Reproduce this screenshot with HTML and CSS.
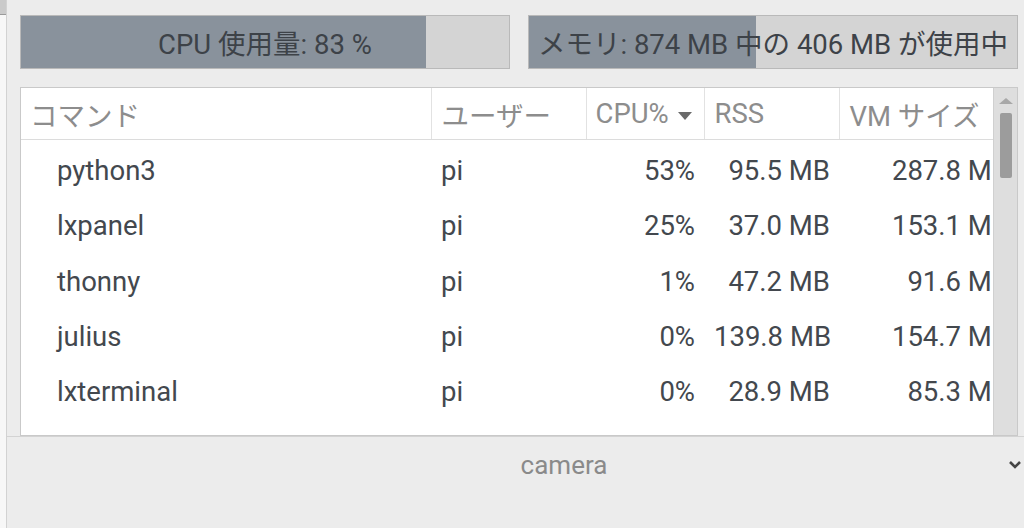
FILE: index.html
```html
<!DOCTYPE html>
<html lang="ja">
<head>
    <meta charset="UTF-8">
    <title>タスクマネージャー</title>
    <link rel="stylesheet" href="styles.css">
</head>
<body>
    <!-- 左端の別ウィンドウ -->
    <div class="borde">
        <div class="borde-top"></div>
    </div>

    <div class="ventana">
        <div class="contenido">
            <!-- 使用量バー -->
            <div class="barras">
                <div class="barra">
                    <div class="relleno" style="width: 83%"></div>
                    <span class="texto">CPU 使用量: 83 %</span>
                </div>
                <div class="barra">
                    <div class="relleno" style="width: 46.5%"></div>
                    <span class="texto">メモリ: 874 MB 中の 406 MB が使用中</span>
                </div>
            </div>

            <!-- プロセス一覧 -->
            <div class="lista">
                <div class="vista">
                    <table class="procesos">
                        <colgroup>
                            <col class="c-cmd">
                            <col class="c-user">
                            <col class="c-cpu">
                            <col class="c-rss">
                            <col class="c-vm">
                        </colgroup>
                        <thead>
                            <tr>
                                <th>コマンド</th>
                                <th>ユーザー</th>
                                <th>CPU% <span class="orden"></span></th>
                                <th>RSS</th>
                                <th>VM サイズ</th>
                            </tr>
                        </thead>
                        <tbody>
                            <tr><td class="cmd">python3</td><td>pi</td><td class="num">53%</td><td class="num">95.5 MB</td><td class="num">287.8 MB</td></tr>
                            <tr><td class="cmd">lxpanel</td><td>pi</td><td class="num">25%</td><td class="num">37.0 MB</td><td class="num">153.1 MB</td></tr>
                            <tr><td class="cmd">thonny</td><td>pi</td><td class="num">1%</td><td class="num">47.2 MB</td><td class="num">91.6 MB</td></tr>
                            <tr><td class="cmd">julius</td><td>pi</td><td class="num">0%</td><td class="num">139.8 MB</td><td class="num">154.7 MB</td></tr>
                            <tr><td class="cmd">lxterminal</td><td>pi</td><td class="num">0%</td><td class="num">28.9 MB</td><td class="num">85.3 MB</td></tr>
                        </tbody>
                    </table>
                </div>
                <div class="scroll">
                    <div class="flecha"></div>
                    <div class="pulgar"></div>
                </div>
            </div>
        </div>

        <!-- Selector de cámara -->
        <div class="selector">
            <span class="etiqueta">camera</span>
            <svg class="chevron" width="14" height="10" viewBox="0 0 14 10">
                <polyline points="2,2 7,7 12,2" fill="none" stroke="#444" stroke-width="2.6"/>
            </svg>
        </div>
    </div>
</body>
</html>
```

FILE: styles.css
```css
/* Cuerpo */
html, body {
    margin: 0;
    height: 100%;
}

body {
    display: flex;
    background-color: #ececec;
    font-family: Roboto, "Noto Sans CJK JP", sans-serif;
    font-size: 27.5px;
    color: #43484e;
    overflow: hidden;
}

/* Borde izquierdo (otra ventana) */
.borde {
    width: 6px;
    background-color: #f7f7f7;
    border-right: 1px solid #d2d2d2;
    flex-shrink: 0;
}

.borde-top {
    height: 14px;
    background-color: #cacaca;
    border-bottom: 1px solid #9a9a9a;
}

/* Ventana principal */
.ventana {
    flex: 1;
    display: flex;
    flex-direction: column;
    min-width: 0;
}

.contenido {
    flex: 1;
    display: flex;
    flex-direction: column;
    gap: 18px;
    padding: 15px 6px 0 13px;
    overflow: hidden;
    min-height: 0;
}

/* Barras de uso */
.barras {
    display: flex;
    gap: 18px;
    flex-shrink: 0;
}

.barra {
    position: relative;
    flex: 1;
    height: 52px;
    background-color: #d4d4d4;
    border: 1px solid #b9b9b9;
    display: flex;
    align-items: center;
    justify-content: center;
    overflow: hidden;
}

.relleno {
    position: absolute;
    left: 0;
    top: 0;
    bottom: 0;
    background-color: #89929c;
}

.texto {
    position: relative; /* encima del relleno */
    white-space: nowrap;
    color: #3d4248;
}

/* Lista de procesos */
.lista {
    flex: 1;
    display: flex;
    background-color: #fff;
    border: 1px solid #c9c9c9;
    min-height: 0;
}

.vista {
    flex: 1;
    overflow: hidden;
}

.procesos {
    table-layout: fixed;
    border-collapse: collapse;
    width: 997px;
}

.c-cmd { width: 410px; }
.c-user { width: 155px; }
.c-cpu { width: 118px; }
.c-rss { width: 135px; }
.c-vm { width: 179px; }

.procesos th {
    height: 51px;
    padding: 0 10px;
    text-align: left;
    font-weight: normal;
    color: #8d8d8d;
    white-space: nowrap;
    overflow: hidden;
    border-right: 1px solid #e2e2e2;
    border-bottom: 1px solid #dcdcdc;
}

.procesos th:first-child,
.procesos th:nth-child(3) {
    padding-left: 9px;
}

.orden {
    display: inline-block;
    width: 0;
    height: 0;
    border-left: 7px solid transparent;
    border-right: 7px solid transparent;
    border-top: 8px solid #6a6a6a;
    vertical-align: middle;
    margin-left: 2px;
}

.procesos td {
    height: 49.25px;
    padding: 6px 10px 0;
    white-space: nowrap;
    overflow: hidden;
}

.procesos td.cmd {
    padding-left: 36px;
}

.procesos td.num {
    text-align: right;
    padding-right: 9px;
}

/* Barra de desplazamiento */
.scroll {
    width: 23px;
    background-color: #dedede;
    border-left: 1px solid #d0d0d0;
    display: flex;
    flex-direction: column;
    align-items: center;
    flex-shrink: 0;
}

.flecha {
    margin-top: 10px;
    width: 0;
    height: 0;
    border-left: 7px solid transparent;
    border-right: 7px solid transparent;
    border-bottom: 6px solid #a8a8a8;
}

.pulgar {
    margin-top: 9px;
    width: 12px;
    height: 65px;
    background-color: #9c9c9c;
    border-radius: 2px;
}

/* Selector inferior */
.selector {
    box-sizing: border-box;
    height: 92px;
    flex-shrink: 0;
    border-top: 1px solid #d3d3d3;
    background-color: #ececec;
    display: flex;
    align-items: flex-start;
    padding: 13px 2px 0 113px;
}

.etiqueta {
    flex: 1;
    text-align: center;
    line-height: 30px;
    color: #8a8a8a;
    font-size: 26px;
}

.chevron {
    margin-top: 10px;
}
```
